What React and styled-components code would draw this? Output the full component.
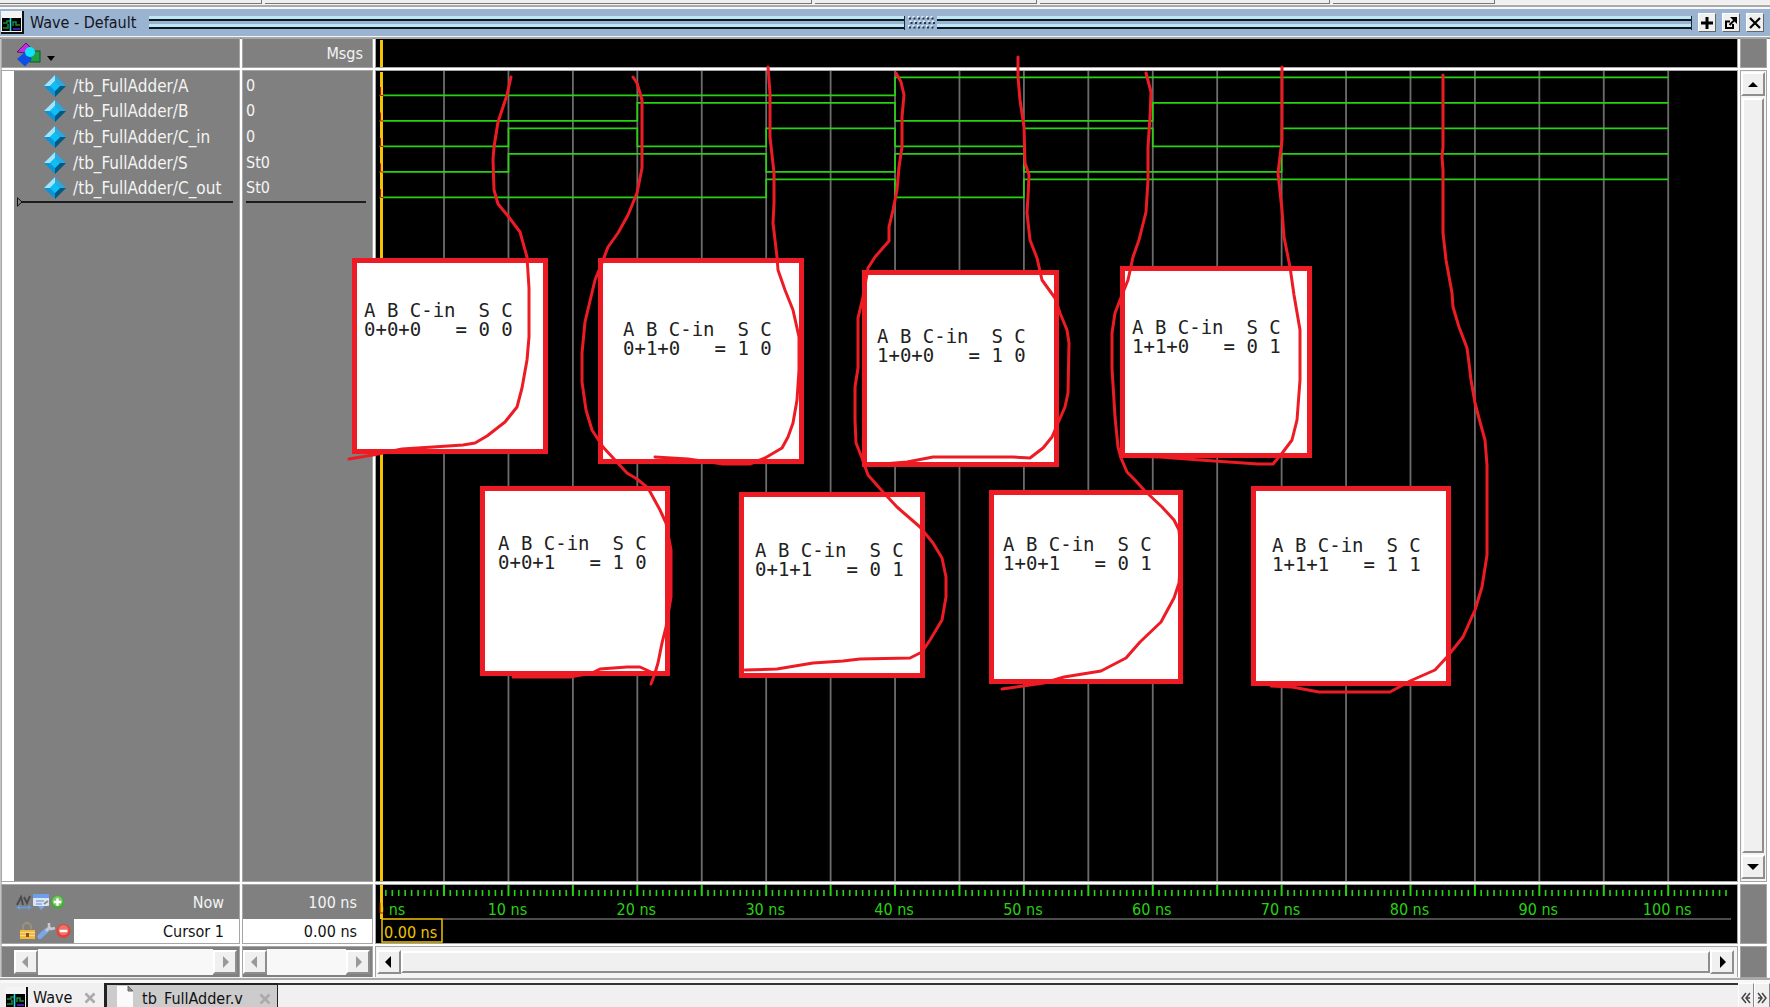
import React from "react";
import styled, { createGlobalStyle, css } from "styled-components";

const GlobalStyle = createGlobalStyle`
  * { box-sizing: border-box; }
  body {
    margin: 0;
    background: #f0f0f0;
    font-family: "DejaVu Sans Condensed", "Noto Sans", sans-serif;
    font-size: 16px;
    line-height: 20px;
    color: #111;
  }
  button { font: inherit; color: inherit; padding: 0; margin: 0; }
  ul { list-style: none; margin: 0; padding: 0; }
`;

const RED = "#ed1c24";
const GREEN = "#28d212";
const YELLOW = "#f2c500";
const GREY = "#808080";

/* ---------- data ---------- */

const SIGNALS = [
  { name: "/tb_FullAdder/A", value: "0", edges: [40] },
  { name: "/tb_FullAdder/B", value: "0", edges: [20, 40, 60] },
  { name: "/tb_FullAdder/C_in", value: "0", edges: [10, 20, 30, 40, 50, 60, 70] },
  { name: "/tb_FullAdder/S", value: "St0", edges: [10, 30, 40, 50, 70] },
  { name: "/tb_FullAdder/C_out", value: "St0", edges: [30, 40, 50] },
];

const NOTES = [
  { x: 352, y: 258, w: 196, h: 196, px: 7, py: 38, sum: "0+0+0   = 0 0" },
  { x: 598, y: 258, w: 206, h: 206, px: 20, py: 57, sum: "0+1+0   = 1 0" },
  { x: 862, y: 270, w: 197, h: 197, px: 10, py: 52, sum: "1+0+0   = 1 0" },
  { x: 1120, y: 266, w: 192, h: 192, px: 7, py: 47, sum: "1+1+0   = 0 1" },
  { x: 480, y: 486, w: 190, h: 190, px: 13, py: 43, sum: "0+0+1   = 1 0" },
  { x: 739, y: 492, w: 186, h: 186, px: 11, py: 44, sum: "0+1+1   = 0 1" },
  { x: 989, y: 490, w: 194, h: 194, px: 9, py: 40, sum: "1+0+1   = 0 1" },
  { x: 1251, y: 486, w: 200, h: 200, px: 16, py: 45, sum: "1+1+1   = 1 1" },
];

const STROKES = [
  "511,77 507,95 498,122 494,147 493,160 494,190 498,204 508,216 520,232 527,257 529,288 529,337 527,360 522,388 517,407 505,422 487,436 475,443 463,445 433,447 402,449 373,455 349,459",
  "633,77 637,83 642,100 642,168 637,193 628,215 618,233 608,247 602,263 595,280 585,322 582,353 582,382 586,410 592,430 603,447 615,460 627,473 637,479 648,488 660,510 666,523 671,550 671,597 666,627 662,643 658,663 655,673 651,684",
  "513,677 570,677 592,673 600,669 627,667 640,667 651,672",
  "768,67 770,93 770,137 774,173 774,203 773,223 777,257 778,270 785,290 793,310 799,337 799,370 797,400 793,423 788,437 782,448 765,458 750,464 723,464 688,459 655,457",
  "896,73 901,82 904,95 902,117 902,147 899,167 897,190 893,210 889,227 889,241 875,257 868,268 863,297 858,318 858,368 855,387 855,420 856,443 862,458 868,475 883,492 897,507 920,527 933,543 942,558 946,577 946,597 942,620 930,640 922,652 910,658 860,659 843,661 813,663 777,669 745,670",
  "1018,57 1018,77 1020,100 1024,127 1025,163 1029,175 1028,197 1027,213 1030,240 1037,258 1042,280 1055,298 1060,313 1067,330 1069,343 1068,393 1065,407 1058,423 1052,437 1043,448 1030,458 1013,457 933,457 907,462 883,464",
  "1146,73 1151,92 1150,117 1148,147 1148,180 1146,212 1139,240 1133,257 1128,280 1120,300 1115,313 1112,333 1112,368 1115,417 1118,447 1121,458 1127,472 1135,480 1144,490 1162,507 1174,520 1179,530 1181,555 1179,583 1174,598 1161,622 1140,642 1126,658 1101,671 1064,677 1044,683 1002,689",
  "1282,67 1282,140 1278,173 1282,210 1284,237 1290,267 1294,295 1300,330 1300,380 1297,420 1292,440 1283,452 1273,464 1258,464 1200,460 1160,457 1122,456",
  "1443,75 1443,147 1442,157 1443,170 1443,233 1446,260 1452,293 1453,307 1459,327 1467,348 1469,363 1471,380 1475,403 1480,422 1485,440 1487,465 1487,555 1482,587 1475,610 1463,637 1447,657 1435,670 1410,681 1390,692 1319,692 1292,687 1271,686",
];

/* ---------- window frame ---------- */

const Window = styled.div`
  position: relative;
  height: 100vh;
  display: flex;
  flex-direction: column;
  overflow: hidden;
  background: #f0f0f0;
`;

const ToolbarEdge = styled.div`
  display: flex;
  gap: 3px;
  height: 4px;
`;

const ToolbarPiece = styled.div`
  width: ${(p) => p.$w}px;
  background: #efefef;
  border-right: 1px solid #777;
  border-bottom: 1px solid #777;
`;

const Ridge = styled.div`
  flex: none;
  height: ${(p) => p.$h}px;
  background: linear-gradient(#f4f4f4 0 1px, #a9a9a9 1px 3px, #f8f8f8 3px);
`;

const TitleBar = styled.header`
  flex: none;
  height: 27px;
  display: flex;
  align-items: center;
  gap: 6px;
  padding: 0 6px 0 1px;
  background: #99b3d1;
`;

const Title = styled.h1`
  margin: 0;
  width: 113px;
  font-size: 16px;
  font-weight: 400;
  white-space: nowrap;
  color: #15151c;
`;

const Grip = styled.div`
  flex: 1;
  height: 14px;
  display: flex;
  gap: 2px;
`;

const GripLines = styled.div`
  flex: 1;
  border-right: 1px solid #1b2836;
  background: linear-gradient(
    #bfe6f4 0 3px, #101820 3px 5px, #99b3d1 5px 8px,
    #bfe6f4 8px 11px, #101820 11px 13px, #99b3d1 13px
  );
`;

const TitleButton = styled.button`
  width: 18px;
  height: 19px;
  display: grid;
  place-items: center;
  border: 1px solid;
  border-color: #fff #666 #666 #fff;
  background: #f0f0f0;
`;

/* ---------- panes ---------- */

const Workspace = styled.main`
  flex: 1;
  min-height: 0;
  display: grid;
  grid-template-columns: 237px 129px minmax(0, 1fr) 25px;
  grid-template-rows: 28px minmax(0, 1fr) 58px 30px;
  gap: 4px;
  padding: 0 4px 0 2px;
  background: #fff;
  border-top: 1px solid #8a8a8a;
  box-shadow: inset 2px 0 #c4c4c4;
`;

const Pane = styled.section`
  position: relative;
  min-width: 0;
  overflow: hidden;
  background: ${(p) => (p.$dark ? "#000" : GREY)};
  color: #f4f4f4;
  outline: 1px solid #a6a6a6;
`;

const HeadPane = styled(Pane)`
  display: flex;
  align-items: center;
  justify-content: ${(p) => (p.$end ? "flex-end" : "flex-start")};
  padding: 2px 9px 0 14px;
`;

const MenuButton = styled.button`
  display: flex;
  align-items: flex-end;
  gap: 5px;
  border: 0;
  background: none;
`;

const NamesPane = styled(Pane)`
  border-left: 12px solid #fff;
`;

const SignalList = styled.ul`
  height: 130px;
  padding-top: 2px;
  display: grid;
  grid-auto-rows: 1fr;
  align-items: center;
  white-space: nowrap;
`;

const SignalItem = styled.li`
  display: flex;
  align-items: center;
  gap: 7px;
  padding-left: ${(p) => (p.$icon ? 30 : 3)}px;
  font-size: ${(p) => (p.$icon ? 17 : 16)}px;
`;

const ListEnd = styled.div`
  display: flex;
  align-items: center;
  height: 2px;
  margin: 0 6px 0 3px;
  background: #1c1c1c;
  svg { flex: none; overflow: visible; }
`;

const EndMark = styled.svg`
  display: block;
`;

const FootPane = styled(Pane)`
  display: grid;
  grid-template-rows: 34px 24px;
`;

const FootRow = styled.div`
  display: flex;
  align-items: center;
  padding-left: 14px;
`;

const FootIcons = styled.div`
  display: flex;
  align-items: center;
  width: ${(p) => p.$w}px;
  svg { display: block; }
`;

const FootText = styled.div`
  flex: 1;
  align-self: stretch;
  display: flex;
  align-items: center;
  justify-content: flex-end;
  padding: 1px 15px 0 0;
  ${(p) => p.$selected && css`
    background: #fff;
    color: #111;
  `}
`;

const Canvas = styled.svg`
  display: block;
  width: 100%;
  height: 100%;
  text { font-family: inherit; font-size: 16px; }
`;

/* ---------- scroll bars ---------- */

const ScrollRow = styled.div`
  display: flex;
  align-items: center;
  height: 30px;
  padding: ${(p) => p.$pad};
  background: ${(p) => (p.$grey ? GREY : "#f4f4f4")};
  outline: 1px solid #a6a6a6;
`;

const bevel = css`
  background: #f0f0f0;
  border: 2px solid;
  border-color: #fff #8e8e8e #8e8e8e #fff;
`;

const ArrowButton = styled.button`
  flex: none;
  width: 24px;
  height: 24px;
  display: grid;
  place-items: center;
  ${bevel}
`;

const Trough = styled.div`
  flex: 1;
  height: 26px;
  background: #f8f8f8;
`;

const Thumb = styled.div`
  flex: 1;
  ${bevel}
  ${(p) => (p.$vertical ? "width: 22px;" : "height: 22px;")}
`;

const VScroll = styled.div`
  display: flex;
  flex-direction: column;
  align-items: center;
  gap: 2px;
  padding: 1px 2px 2px 0;
  background: #f4f4f4;
  outline: 1px solid #a6a6a6;
`;

/* ---------- tabs ---------- */

const TabRow = styled.nav`
  flex: none;
  display: flex;
  height: 24px;
  background: #f0f0f0;
`;

const Tab = styled.button`
  display: flex;
  align-items: center;
  height: 30px;
  border: 0;
  white-space: nowrap;
  ${(p) => p.$active
    ? css`
        width: 104px;
        gap: 5px;
        padding: 0 8px 0 5px;
        background: #f0f0f0;
      `
    : css`
        width: 174px;
        gap: 8px;
        padding: 0 6px 0 9px;
        background: #ccc;
        border: solid #222;
        border-width: 2px 1px 0 3px;
      `}
`;

const TabLabel = styled.span`
  flex: 1;
  text-align: left;
`;

const TabFill = styled.div`
  flex: 1;
  border-top: 2px solid #333;
`;

const PageButton = styled.button`
  width: 16px;
  height: 30px;
  display: grid;
  place-items: center;
  border: 1px solid;
  border-color: #fff #888 #888 #fff;
  background: #f0f0f0;
`;

/* ---------- annotations drawn over the wave ---------- */

const Note = styled.pre`
  position: absolute;
  left: ${(p) => p.$x}px;
  top: ${(p) => p.$y}px;
  width: ${(p) => p.$w}px;
  height: ${(p) => p.$h}px;
  margin: 0;
  padding: ${(p) => p.$py}px 0 0 ${(p) => p.$px}px;
  border: 5px solid ${RED};
  background: #fff;
  color: #222;
  font-family: "DejaVu Sans Mono", monospace;
  font-size: 19px;
  line-height: 19px;
`;

const Ink = styled.svg`
  position: absolute;
  inset: 0;
  width: 100%;
  height: 100%;
  pointer-events: none;
`;

/* ---------- icons ---------- */

const WaveIcon = () => (
  <svg width="23" height="23" viewBox="0 0 23 23">
    <rect width="23" height="23" fill="#111" />
    <rect width="21" height="21" fill="#f4f4f4" />
    <rect x="1" y="7" width="19" height="13" fill="#000" />
    <path d="M2 12h4v-2h3M2 17h5v-4M12 15v-4h3v3h4" stroke="#1a8a3a" strokeWidth="1.500" fill="none" />
    <path d="M9.500 7v13" stroke="#27d7e6" strokeWidth="1.600" />
    <path d="M12 18h7" stroke="#4a2ad0" strokeWidth="1.600" />
  </svg>
);

const ShapesIcon = () => (
  <svg width="26" height="25" viewBox="0 0 26 25">
    <path d="M1 10 10 1l5 5-6 5z" fill="#c32be0" stroke="#5a1668" />
    <rect x="14" y="9" width="10" height="11" fill="#1fa045" stroke="#0c5a22" />
    <path d="M9 10l7 7-7 7.500-8-7.500z" fill="#0b50e6" />
    <circle cx="14" cy="10" r="5" fill="#10e4fa" />
  </svg>
);

const MenuArrow = () => (
  <svg width="8" height="14" viewBox="0 0 8 14">
    <path d="M0 3h8L4 8z" fill="#000" />
  </svg>
);

const Diamond = () => (
  <svg width="22" height="22" viewBox="0 0 22 22">
    <path d="M11 0 22 11 11 22 0 11z" fill="#0d94d6" />
    <path d="M11 0v6l-5 5H0z" fill="#a5e4f8" />
    <path d="M11 0 22 11h-6l-5-5z" fill="#2fa6dc" />
    <path d="M22 11 11 22v-6l5-5z" fill="#07587f" />
    <path d="M11 6l5 5-5 5-5-5z" fill="#0cc0f6" />
  </svg>
);

const ARROWS = { left: "M8 0v12L2 6z", right: "M4 0v12l6-6z", up: "M1 9h10L6 4z", down: "M0 3h12L6 9z" };
const Arrow = ({ dir, fill = "#000" }) => (
  <svg width="12" height="12" viewBox="0 0 12 12">
    <path d={ARROWS[dir]} fill={fill} />
  </svg>
);

const Badge = ({ minus }) => (
  <svg width="15" height="16" viewBox="0 0 16 16">
    <circle cx="8" cy="8" r="7.500" fill={minus ? "#e2413a" : "#4aa640"} />
    <circle cx="8" cy="7" r="5.500" fill={minus ? "#f0736a" : "#7cc66c"} />
    <path d={minus ? "M4 8h8" : "M4 8h8M8 4v8"} stroke="#fff" strokeWidth="2.600" />
  </svg>
);

const EdgeIcon = () => (
  <svg width="16" height="16" viewBox="0 0 16 16">
    <path d="M1 11 5 3l2 8M8 3l3 6 3-7" stroke="#4c4c50" strokeWidth="2" fill="none" />
    <path d="M2 13.500h12M4 11.500l-2.500 2 2.500 2M12 11.500l2.500 2-2.500 2" stroke="#6b9bdc" strokeWidth="1.300" fill="none" />
  </svg>
);

const SheetIcon = () => (
  <svg width="18" height="18" viewBox="0 0 18 18">
    <rect x="1" y="1" width="16" height="12" rx="1" fill="#d9e6fa" />
    <path d="M1 1h16v4H1z" fill="#6f9fe6" />
    <path d="M4 8h8M4 11h6" stroke="#8fa8d0" strokeWidth="1.500" />
    <path d="M6 13h7l-4 4z" fill="#77a5e8" />
    <path d="M12 11l4-3" stroke="#8d8d8d" strokeWidth="2" />
  </svg>
);

const LockIcon = () => (
  <svg width="20" height="18" viewBox="-3 0 20 18">
    <path d="M4 9V5a4 4 0 0 1 8 0v2" stroke="#9b927d" strokeWidth="2" fill="none" />
    <rect x="1" y="8" width="15" height="9" fill="#f5b83d" />
    <path d="M1 10.500h15M1 13.500h15" stroke="#fbd98a" />
    <rect x="7" y="11" width="3" height="4" fill="#7b5a1c" />
  </svg>
);

const WrenchIcon = () => (
  <svg width="20" height="20" viewBox="0 0 20 20">
    <path d="M4 15.500 11 9" stroke="#7ba7ea" strokeWidth="5" strokeLinecap="round" />
    <path d="M10 10l4-4M13 2v4l2 2 4-1" stroke="#c6c9cf" strokeWidth="2.500" fill="none" />
  </svg>
);

const CrossIcon = () => (
  <svg width="12" height="12" viewBox="0 0 12 12">
    <path d="M1.500 1.500l9 9M10.500 1.500l-9 9" stroke="#aaa" strokeWidth="2.600" />
  </svg>
);

const PageIcon = () => (
  <svg width="18" height="26" viewBox="0 0 18 26">
    <path d="M1 0h11l5 5v21H1z" fill="#fafafa" />
    <path d="M12 0v5h5z" fill="#888" stroke="#666" />
  </svg>
);

const GripDots = () => (
  <svg width="28" height="14" viewBox="0 0 28 14">
    {[0, 1, 2].map((r) =>
      [0, 1, 2, 3, 4, 5].map((c) => {
        const x = 1 + c * 4.500 + (r % 2) * 1.500;
        const y = 1 + r * 4.500;
        return (
          <g key={`${r}-${c}`}>
            <rect x={x} y={y - 1} width="2" height="2" fill="#e2f2fa" />
            <rect x={x + 1} y={y + 0.500} width="2" height="2" fill="#26384c" />
          </g>
        );
      })
    )}
  </svg>
);

/* ---------- wave drawing ---------- */

const timeX = (ns) => 3.600 + ns * 12.886;
const EVERY_5NS = Array.from({ length: 21 }, (_, i) => i * 5);

function tracePath(edges, row) {
  const low = 24.400 + row * 25.500;
  const high = low - 18;
  let level = low;
  let d = `M${timeX(0)} ${level}`;
  edges.forEach((t) => {
    level = level === low ? high : low;
    d += `H${timeX(t)}V${level}`;
  });
  return `${d}H${timeX(100)}`;
}

const WaveCanvas = () => (
  <Canvas role="img" aria-label="Waveforms">
    {EVERY_5NS.slice(1).map((t) => (
      <rect key={t} x={timeX(t) - 0.900} y="0" width="1.800" height="100%" fill="#6c6c6c" />
    ))}
    {SIGNALS.map((s, i) => (
      <path key={s.name} d={tracePath(s.edges, i)} fill="none" stroke={GREEN} strokeWidth="1.700" />
    ))}
    <rect x="4" y="1" width="3" height="100%" fill={YELLOW} />
    {SIGNALS.map((s, i) => (
      <path key={s.name} d={`M4.500 ${16 + i * 25.500}v8.500h3`} fill="none" stroke="#c01808" />
    ))}
  </Canvas>
);

const Ruler = () => (
  <Canvas role="img" aria-label="Time scale">
    {Array.from({ length: 210 }, (_, i) => i / 2).map((t) => (
      <rect
        key={t}
        x={timeX(t) - 1}
        y={t % 5 === 0 ? 0 : 5}
        width={t % 5 === 0 ? 2 : 1.600}
        height={t % 5 === 0 ? 11 : 6}
        fill={GREEN}
      />
    ))}
    <text x="-1" y="30" fill={GREEN}>0 ns</text>
    {[10, 20, 30, 40, 50, 60, 70, 80, 90, 100].map((t) => (
      <text key={t} x={timeX(t) - 1} y="30" textAnchor="middle" fill={GREEN}>{`${t} ns`}</text>
    ))}
    <path d="M67 34H1355" stroke="#666" strokeWidth="1.500" />
    <rect x="0" y="0" width="7" height="34" fill="#000" />
    <rect x="4" y="0" width="3" height="34" fill={YELLOW} />
    <path d="M4 18v10h3" stroke="#c01808" fill="none" />
    <rect x="6" y="34" width="60" height="23" fill="#000" stroke={YELLOW} strokeWidth="1.500" />
    <text x="8" y="53" fill={YELLOW}>0.00 ns</text>
  </Canvas>
);

export default function App() {
  return (
    <>
      <GlobalStyle />
      <Window>
        <ToolbarEdge>
          <ToolbarPiece $w={262} />
          <ToolbarPiece $w={547} />
          <ToolbarPiece $w={222} />
          <ToolbarPiece $w={290} />
          <ToolbarPiece $w={162} />
        </ToolbarEdge>
        <Ridge $h={5} />
        <TitleBar>
          <WaveIcon />
          <Title>Wave - Default</Title>
          <Grip>
            <GripLines />
            <GripDots />
            <GripLines />
          </Grip>
          <TitleButton aria-label="Add">
            <svg width="14" height="14" viewBox="0 0 14 14">
              <path d="M1 7h12M7 1v12" stroke="#000" strokeWidth="3" />
            </svg>
          </TitleButton>
          <TitleButton aria-label="Undock">
            <svg width="14" height="14" viewBox="0 0 14 14">
              <path d="M6 5.500H2V12h7V8M5.500 9l5-5" stroke="#000" strokeWidth="2" fill="none" />
              <path d="M6 1h7v7z" fill="#000" />
            </svg>
          </TitleButton>
          <TitleButton aria-label="Close">
            <svg width="14" height="14" viewBox="0 0 14 14">
              <path d="M2 2l10 10M12 2L2 12" stroke="#000" strokeWidth="2.200" />
            </svg>
          </TitleButton>
        </TitleBar>
        <Ridge $h={2} />

        <Workspace>
          <HeadPane>
            <MenuButton aria-label="Signal display">
              <ShapesIcon />
              <MenuArrow />
            </MenuButton>
          </HeadPane>
          <HeadPane $end>Msgs</HeadPane>
          <Pane $dark>
            <Canvas>
              <rect x="4" y="1" width="3" height="100%" fill={YELLOW} />
            </Canvas>
          </Pane>
          <Pane />

          <NamesPane>
            <SignalList>
              {SIGNALS.map((s) => (
                <SignalItem key={s.name} $icon>
                  <Diamond />
                  {s.name}
                </SignalItem>
              ))}
            </SignalList>
            <ListEnd>
              <EndMark width="6" height="10" viewBox="0 0 6 10">
                <path d="M.5.8v8.400L5 5z" fill={GREY} stroke="#111" />
              </EndMark>
            </ListEnd>
          </NamesPane>
          <Pane>
            <SignalList>
              {SIGNALS.map((s) => (
                <SignalItem key={s.name}>{s.value}</SignalItem>
              ))}
            </SignalList>
            <ListEnd />
          </Pane>
          <Pane $dark>
            <WaveCanvas />
          </Pane>
          <VScroll>
            <ArrowButton aria-label="Scroll up"><Arrow dir="up" /></ArrowButton>
            <Thumb $vertical />
            <ArrowButton aria-label="Scroll down"><Arrow dir="down" /></ArrowButton>
          </VScroll>

          <FootPane>
            <FootRow>
              <FootIcons $w={58}>
                <EdgeIcon />
                <SheetIcon />
                <Badge />
              </FootIcons>
              <FootText>Now</FootText>
            </FootRow>
            <FootRow>
              <FootIcons $w={58}>
                <LockIcon />
                <WrenchIcon />
                <Badge minus />
              </FootIcons>
              <FootText $selected>Cursor 1</FootText>
            </FootRow>
          </FootPane>
          <FootPane>
            <FootText>100 ns</FootText>
            <FootText $selected>0.00 ns</FootText>
          </FootPane>
          <Pane $dark>
            <Ruler />
          </Pane>
          <Pane />

          <ScrollRow $grey $pad="0 2px 0 12px">
            <ArrowButton aria-label="Scroll names left"><Arrow dir="left" fill="#999" /></ArrowButton>
            <Trough />
            <ArrowButton aria-label="Scroll names right"><Arrow dir="right" fill="#999" /></ArrowButton>
          </ScrollRow>
          <ScrollRow $grey $pad="0 2px 0 0">
            <ArrowButton aria-label="Scroll values left"><Arrow dir="left" fill="#999" /></ArrowButton>
            <Trough />
            <ArrowButton aria-label="Scroll values right"><Arrow dir="right" fill="#999" /></ArrowButton>
          </ScrollRow>
          <ScrollRow $pad="0 3px 0 1px">
            <ArrowButton aria-label="Scroll wave left"><Arrow dir="left" /></ArrowButton>
            <Thumb />
            <ArrowButton aria-label="Scroll wave right"><Arrow dir="right" /></ArrowButton>
          </ScrollRow>
          <Pane />
        </Workspace>
        <Ridge $h={6} />

        <TabRow>
          <Tab $active>
            <WaveIcon />
            <TabLabel>Wave</TabLabel>
            <CrossIcon />
          </Tab>
          <Tab>
            <PageIcon />
            <TabLabel>tb_FullAdder.v</TabLabel>
            <CrossIcon />
          </Tab>
          <TabFill />
          <PageButton aria-label="Previous tab">
            <svg width="12" height="14" viewBox="0 0 12 14">
              <path d="M6 2 2 7l4 5M10 2 6 7l4 5M7 7h3" stroke="#444" strokeWidth="1.500" fill="none" />
            </svg>
          </PageButton>
          <PageButton aria-label="Next tab">
            <svg width="12" height="14" viewBox="0 0 12 14">
              <path d="M2 2l4 5-4 5M6 2l4 5-4 5M2 7h3" stroke="#444" strokeWidth="1.500" fill="none" />
            </svg>
          </PageButton>
        </TabRow>

        {NOTES.map((n) => (
          <Note key={n.sum} $x={n.x} $y={n.y} $w={n.w} $h={n.h} $px={n.px} $py={n.py}>
            {`A B C-in  S C\n${n.sum}`}
          </Note>
        ))}
        <Ink aria-hidden="true">
          {STROKES.map((pts) => (
            <polyline
              key={pts}
              points={pts}
              fill="none"
              stroke={RED}
              strokeWidth="3"
              strokeLinejoin="round"
              strokeLinecap="round"
            />
          ))}
        </Ink>
      </Window>
    </>
  );
}
